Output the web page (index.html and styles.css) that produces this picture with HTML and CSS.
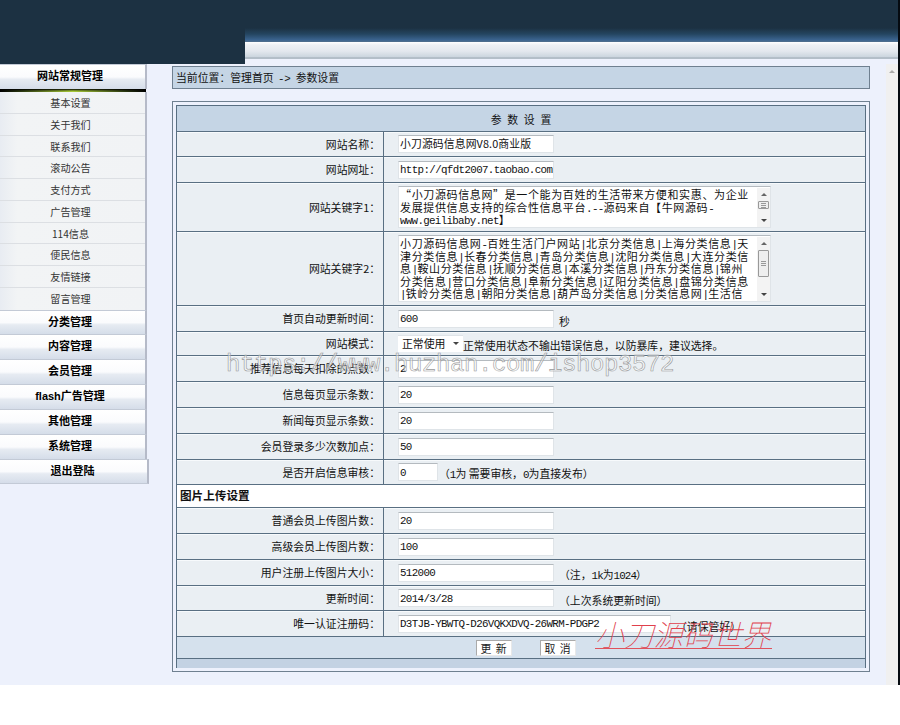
FILE: index.html
```html
<!DOCTYPE html>
<html lang="zh-CN">

<head>
  <meta charset="UTF-8">
  <title>参数设置</title>
  <link rel="stylesheet" href="styles.css">
</head>

<body>

  <div class="frame">
    <div class="header">
      <div class="logo"></div>
      <div class="topbar">
        <div class="topbar-dark"></div>
        <div class="topbar-light"></div>
      </div>
    </div>

    <div class="body">
      <div class="sidebar">
        <div class="menu-title first">网站常规管理</div>
        <div class="menu-line"></div>
        <ul class="menu">
          <li>基本设置</li>
          <li>关于我们</li>
          <li>联系我们</li>
          <li>滚动公告</li>
          <li>支付方式</li>
          <li>广告管理</li>
          <li>114信息</li>
          <li>便民信息</li>
          <li>友情链接</li>
          <li>留言管理</li>
        </ul>
        <div class="menu-title">分类管理</div>
        <div class="menu-title">内容管理</div>
        <div class="menu-title">会员管理</div>
        <div class="menu-title">flash广告管理</div>
        <div class="menu-title">其他管理</div>
        <div class="menu-title">系统管理</div>
        <div class="menu-title logout">退出登陆</div>
      </div>

      <div class="main">
        <div class="location">当前位置：管理首页 <span class="en arrow">-&gt;</span> 参数设置</div>

        <form class="panel">
          <div class="table">
            <div class="caption">参 数 设 置</div>
            <div class="row h25"><label>网站名称：</label><div class="cell"><input class="cn" value="小刀源码信息网V8.0商业版"></div></div>
            <div class="row h26"><label>网站网址：</label><div class="cell"><input value="http://qfdt2007.taobao.com"></div></div>
            <div class="row h49"><label>网站关键字1：</label>
              <div class="cell">
                <div class="area small">
                  <div class="lines">
                    <p>“小刀源码信息网”是一个能为百姓的生活带来方便和实惠、为企业</p>
                    <p>发展提供信息支持的综合性信息平台<span class="en">.--</span>源码来自【牛网源码<span class="en">-</span></p>
                    <p><span class="en">www.geilibaby.net</span>】</p>
                  </div>
                  <div class="bar"><i class="up"></i><i class="thumb"></i><i class="down"></i></div>
                </div>
              </div>
            </div>
            <div class="row h74"><label>网站关键字2：</label>
              <div class="cell">
                <div class="area large">
                  <div class="lines">
                    <p>小刀源码信息网<span class="en">-</span>百姓生活门户网站<span class="en">|</span>北京分类信息<span class="en">|</span>上海分类信息<span class="en">|</span>天</p>
                    <p>津分类信息<span class="en">|</span>长春分类信息<span class="en">|</span>青岛分类信息<span class="en">|</span>沈阳分类信息<span class="en">|</span>大连分类信</p>
                    <p>息<span class="en">|</span>鞍山分类信息<span class="en">|</span>抚顺分类信息<span class="en">|</span>本溪分类信息<span class="en">|</span>丹东分类信息<span class="en">|</span>锦州</p>
                    <p>分类信息<span class="en">|</span>营口分类信息<span class="en">|</span>阜新分类信息<span class="en">|</span>辽阳分类信息<span class="en">|</span>盘锦分类信息</p>
                    <p><span class="en">|</span>铁岭分类信息<span class="en">|</span>朝阳分类信息<span class="en">|</span>葫芦岛分类信息<span class="en">|</span>分类信息网<span class="en">|</span>生活信</p>
                  </div>
                  <div class="bar"><i class="up"></i><i class="thumb"></i><i class="down"></i></div>
                </div>
              </div>
            </div>
            <div class="row h26"><label>首页自动更新时间：</label><div class="cell"><input value="600"><span class="note">秒</span></div></div>
            <div class="row h24"><label>网站模式：</label><div class="cell"><div class="select">正常使用<i class="down"></i></div><span class="note tight">正常使用状态不输出错误信息，以防暴库，建议选择。</span></div></div>
            <div class="row h26"><label>推荐信息每天扣除的点数：</label><div class="cell"><input value="2"></div></div>
            <div class="row h26"><label>信息每页显示条数：</label><div class="cell"><input value="20"></div></div>
            <div class="row h26"><label>新闻每页显示条数：</label><div class="cell"><input value="20"></div></div>
            <div class="row h26"><label>会员登录多少次数加点：</label><div class="cell"><input value="50"></div></div>
            <div class="row h25"><label>是否开启信息审核：</label><div class="cell"><input class="short" value="0"><span class="note near">（<span class="en">1</span>为 需要审核，<span class="en">0</span>为直接发布）</span></div></div>
            <div class="section">图片上传设置</div>
            <div class="row h26"><label>普通会员上传图片数：</label><div class="cell"><input value="20"></div></div>
            <div class="row h26"><label>高级会员上传图片数：</label><div class="cell"><input value="100"></div></div>
            <div class="row h26"><label>用户注册上传图片大小：</label><div class="cell"><input value="512000"><span class="note">（注，<span class="en">1k</span>为<span class="en">1024</span>）</span></div></div>
            <div class="row h25"><label>更新时间：</label><div class="cell"><input value="2014/3/28"><span class="note">（上次系统更新时间）</span></div></div>
            <div class="row h26"><label>唯一认证注册码：</label><div class="cell"><input class="long" value="D3TJB-YBWTQ-D26VQKXDVQ-26WRM-PDGP2"><span class="note">（请保管好）</span></div></div>
            <div class="actions"><button type="button">更 新</button><button type="button">取 消</button></div>
            <div class="foot"></div>
          </div>
        </form>
      </div>

      <div class="page-scroll"><i class="up"></i></div>
    </div>
  </div>

  <div class="mark-url">https://www.huzhan.com/ishop3572</div>
  <div class="mark-red">小刀源码世界</div>

</body>
</html>
```
FILE: styles.css
```css
* {
  box-sizing: border-box;
}
body {
  margin: 0;
  width: 900px;
  height: 725px;
  overflow: hidden;
  position: relative;
  background: #fff;
  color: #111;
  font-family: "Noto Sans CJK SC", sans-serif;
  font-size: 10.85px;
  line-height: 14px;
}
p, ul {
  margin: 0;
  padding: 0;
  list-style: none;
}
.en {
  font-family: "Liberation Mono", monospace;
  font-size: 10.85px;
  letter-spacing: -0.9px;
}
.en.arrow {
  margin: 0 3px 0 2px;
  letter-spacing: -0.4px;
}
.frame {
  width: 900px;
  height: 685px;
  background: #edf1fc;
  border-right: 2px solid #050a10;
}

/* header */
.header {
  display: flex;
  height: 64px;
}
.logo {
  width: 245px;
  background: #1c3142;
}
.topbar {
  flex: 1;
}
.topbar-dark {
  height: 42px;
  background: linear-gradient(#1c3142 0, #1c3142 28px, #244560 34px, #3b6490 40px, #53708c 42px);
}
.topbar-light {
  height: 17px;
  background: linear-gradient(#fff 0, #eef0f4 3px, #e4e8ee 9px, #cbd5de 15px);
  border-bottom: 2px solid #b3bec8;
}
.body {
  display: flex;
  height: 621px;
}

/* menu */
.sidebar {
  width: 172px;
}
.menu-title {
  width: 147px;
  height: 24.85px;
  padding-right: 5px;
  border-top: 1px solid #c3cad6;
  border-right: 2px solid #b5bac8;
  background: linear-gradient(#fff 0, #fafbfd 50%, #e6ebf2 60%, #d5dde9 100%);
  color: #000;
  font-family: "Liberation Sans", "Noto Sans CJK SC", sans-serif;
  font-size: 11px;
  font-weight: bold;
  line-height: 22px;
  text-align: center;
}
.menu-title.first {
  height: 25px;
}
.menu-title.logout {
  width: 149px;
  padding-right: 2px;
  height: 25.5px;
  border-bottom: 1px solid #c3cad6;
}
.menu-line {
  width: 146px;
  height: 3px;
  background: linear-gradient(#000, transparent 70%), linear-gradient(90deg, #000, #2c3a10 15%, #a9cb3a 50%, #2c3a10 85%, #000);
}
.menu {
  width: 147px;
  border-right: 2px solid #b5bac8;
  background: linear-gradient(90deg, #e8ecf2, #f2f4f5 12%, #f1f3f5);
}
.menu li {
  height: 21.75px;
  padding-right: 4px;
  border-bottom: 1px solid #dcdfe3;
  color: #333;
  font-size: 10.1px;
  line-height: 22px;
  text-align: center;
}
.menu li:last-child {
  border-bottom: none;
}

/* content */
.main {
  width: 698px;
  padding-top: 2px;
}
.location {
  height: 23px;
  padding-left: 3px;
  border: 1px solid #6f8090;
  background: #c5d5e5;
  line-height: 21px;
}
.panel {
  height: 571px;
  margin: 12px 0 0;
  padding: 3px;
  border: 1px solid #6f8090;
}
.table {
  border: 1px solid #596f82;
  border-bottom: none;
}
.caption {
  height: 26px;
  border-bottom: 1px solid #596f82;
  background: #c5d5e5;
  line-height: 26px;
  text-align: center;
  word-spacing: 3.3px;
}
.row {
  display: flex;
  border-bottom: 1px solid #596f82;
  background: #eaeff3;
  box-shadow: inset 0 1px #f7fafc;
}
.h24 { height: 24px; }
.h25 { height: 25px; }
.h26 { height: 26px; }
.h49 { height: 49px; }
.h74 { height: 74px; }
.row label {
  display: flex;
  align-items: center;
  justify-content: flex-end;
  width: 207px;
  padding: 0 3px 1px 0;
  border-right: 1px solid #596f82;
}
.cell {
  display: flex;
  align-items: center;
  padding-left: 14px;
}
input {
  width: 156px;
  height: 18px;
  padding: 1px 0 0 1px;
  border: 1px solid #dfe4e8;
  border-top-color: #b4babf;
  background: #fff;
  color: #111;
  font-family: "Liberation Mono", monospace;
  font-size: 10.85px;
  letter-spacing: -0.65px;
}
input.cn {
  padding: 0 0 2px 1px;
  font-family: "Noto Sans CJK SC", sans-serif;
  letter-spacing: 0.1px;
}
input.short {
  width: 40px;
}
input.long {
  width: 273px;
}
.note {
  padding: 4px 0 0 5px;
}
.note.tight {
  padding: 3px 0 0;
}
.note.near {
  padding-left: 1px;
}
.select {
  display: flex;
  align-items: center;
  justify-content: space-between;
  width: 65px;
  height: 17px;
  padding: 0 4px 2px 4px;
  border-top: 1px solid #dfe4e8;
  background: #fff;
}
.up, .down {
  width: 0;
  height: 0;
  border: 3px solid transparent;
}
.up {
  border-top: none;
  border-bottom-color: #666;
}
.down {
  border-bottom: none;
  border-top-color: #444;
}
.area {
  display: flex;
  justify-content: space-between;
  width: 373px;
  padding: 1px 0 0 1px;
  border: 1px solid #dfe4e8;
  border-top-color: #b4babf;
  background: #fff;
}
.area.small {
  height: 42px;
}
.area.large {
  height: 67px;
}
.lines {
  font-size: 11px;
  letter-spacing: 0.63px;
  white-space: nowrap;
}
.lines p {
  height: 12.5px;
  line-height: 12.5px;
}
.lines .en {
  line-height: 1;
  letter-spacing: -0.7px;
}
.bar {
  display: flex;
  flex-direction: column;
  align-items: center;
  width: 13px;
  padding: 5px 0;
  background: #f3f3f3;
}
.thumb {
  width: 11px;
  height: 8px;
  margin-top: 5px;
  border: 1px solid #999;
  border-radius: 1px;
  background: repeating-linear-gradient(#999 0, #999 1px, #eee 1px, #eee 2px) center / 5px 5px no-repeat, #eee;
}
.large .thumb {
  height: 27px;
}
.bar .down {
  margin-top: auto;
}
.section {
  height: 23px;
  padding-left: 3px;
  border-bottom: 1px solid #596f82;
  background: #fff;
  font-size: 11.6px;
  font-weight: bold;
  line-height: 21px;
}
.actions {
  display: flex;
  justify-content: center;
  gap: 28px;
  height: 22px;
  padding: 3px 0 0 9px;
  border-bottom: 1px solid #596f82;
  background: #d5e1ed;
}
button {
  width: 36px;
  height: 16px;
  padding: 0;
  border: 1px solid #e8e8e8;
  border-top-color: #aaa;
  border-left-color: #aaa;
  background: #fff;
  color: #222;
  font-family: "Noto Sans CJK SC", sans-serif;
  font-size: 10.85px;
  line-height: 12px;
  word-spacing: 2px;
}
.foot {
  height: 9px;
  background: #c3d2e3;
}
.page-scroll {
  display: flex;
  justify-content: center;
  width: 12px;
  margin-left: auto;
  padding-top: 6px;
  background: #f0f0f0;
}
.page-scroll .up {
  border-bottom-color: #aaa;
}

/* watermarks over the page */
.mark-url {
  position: absolute;
  left: 226px;
  top: 349px;
  color: rgba(255, 255, 255, 0.5);
  font-family: "Liberation Mono", monospace;
  font-size: 24px;
  line-height: 32px;
  letter-spacing: -0.4px;
  -webkit-text-stroke: 0.6px #999;
}
.mark-red {
  position: absolute;
  left: 595px;
  top: 616px;
  width: 177px;
  height: 33px;
  border-bottom: 1px solid #e0525c;
  color: #e0404c;
  font-size: 29.3px;
  font-style: italic;
  font-weight: 100;
  line-height: 35px;
  white-space: nowrap;
}
```
